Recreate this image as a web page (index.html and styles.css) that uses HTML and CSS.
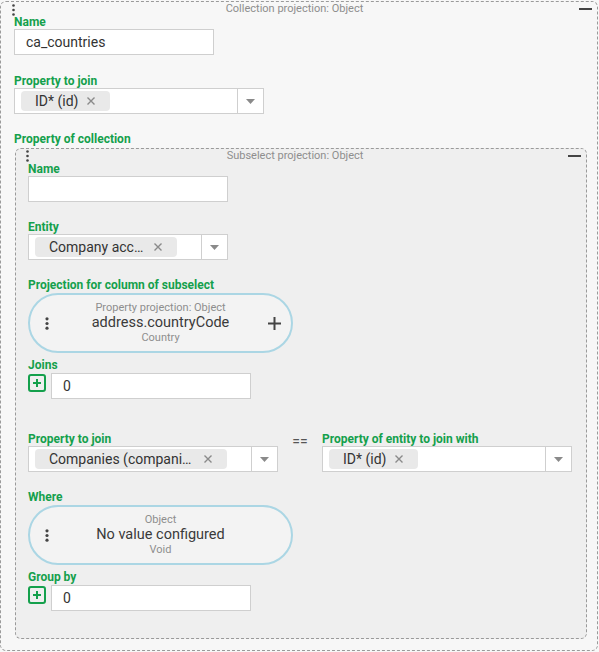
FILE: index.html
```html
<!DOCTYPE html>
<html>
<head>
<meta charset="utf-8">
<link rel="stylesheet" href="styles.css">
</head>
<body>
<div class="node node-outer">
  <div class="node-head">
    <svg class="kebab node-kebab" width="3" height="12" viewBox="0 0 3 12"><circle cx="1.5" cy="1.5" r="1.3"/><circle cx="1.5" cy="6" r="1.3"/><circle cx="1.5" cy="10.5" r="1.3"/></svg>
    <span class="node-title">Collection projection: Object</span>
    <span class="node-min"></span>
  </div>

  <div class="field field-top">
    <div class="lbl">Name</div>
    <div class="txt">ca_countries</div>
  </div>

  <div class="field">
    <div class="lbl">Property to join</div>
    <div class="sel w250">
      <div class="sel-val"><span class="chip"><span class="chip-text">ID* (id)</span><svg class="chip-x" width="8" height="8" viewBox="0 0 8 8"><path d="M0.5 0.5L7.5 7.5M7.5 0.5L0.5 7.5"/></svg></span></div>
      <div class="sel-caret"><svg width="9" height="5" viewBox="0 0 9 5"><path d="M0 0H9L4.5 5Z"/></svg></div>
    </div>
  </div>

  <div class="lbl">Property of collection</div>
  <div class="node node-inner">
    <div class="node-head">
      <svg class="kebab node-kebab" width="3" height="12" viewBox="0 0 3 12"><circle cx="1.5" cy="1.5" r="1.3"/><circle cx="1.5" cy="6" r="1.3"/><circle cx="1.5" cy="10.5" r="1.3"/></svg>
      <span class="node-title">Subselect projection: Object</span>
      <span class="node-min"></span>
    </div>

    <div class="field">
      <div class="lbl">Name</div>
      <div class="txt"></div>
    </div>

    <div class="field">
      <div class="lbl">Entity</div>
      <div class="sel w200">
        <div class="sel-val"><span class="chip"><span class="chip-text">Company accounts</span><svg class="chip-x" width="8" height="8" viewBox="0 0 8 8"><path d="M0.5 0.5L7.5 7.5M7.5 0.5L0.5 7.5"/></svg></span></div>
        <div class="sel-caret"><svg width="9" height="5" viewBox="0 0 9 5"><path d="M0 0H9L4.5 5Z"/></svg></div>
      </div>
    </div>

    <div class="field field-pill">
      <div class="lbl">Projection for column of subselect</div>
      <div class="pill">
        <svg class="kebab pill-kebab" width="4" height="13" viewBox="0 0 4 13"><circle cx="2" cy="1.8" r="1.6"/><circle cx="2" cy="6.5" r="1.6"/><circle cx="2" cy="11.2" r="1.6"/></svg>
        <div class="pill-body">
          <div class="pill-sub">Property projection: Object</div>
          <div class="pill-main">address.countryCode</div>
          <div class="pill-sub">Country</div>
        </div>
        <svg class="pill-plus" width="13" height="13" viewBox="0 0 13 13"><path d="M6.5 0V13M0 6.5H13"/></svg>
      </div>
    </div>

    <div class="field field-joins">
      <div class="lbl">Joins</div>
      <div class="add-row">
        <svg class="add-btn" width="18" height="18" viewBox="0 0 18 18"><rect x="1" y="1" width="16" height="16" rx="2"/><path d="M9 5V13M5 9H13"/></svg>
        <div class="txt">0</div>
      </div>
    </div>

    <div class="field join-row">
      <div class="join-col">
        <div class="lbl">Property to join</div>
        <div class="sel w250">
          <div class="sel-val"><span class="chip"><span class="chip-text">Companies (companies)</span><svg class="chip-x" width="8" height="8" viewBox="0 0 8 8"><path d="M0.5 0.5L7.5 7.5M7.5 0.5L0.5 7.5"/></svg></span></div>
          <div class="sel-caret"><svg width="9" height="5" viewBox="0 0 9 5"><path d="M0 0H9L4.5 5Z"/></svg></div>
        </div>
      </div>
      <div class="join-eq">==</div>
      <div class="join-col">
        <div class="lbl">Property of entity to join with</div>
        <div class="sel w250">
          <div class="sel-val"><span class="chip"><span class="chip-text">ID* (id)</span><svg class="chip-x" width="8" height="8" viewBox="0 0 8 8"><path d="M0.5 0.5L7.5 7.5M7.5 0.5L0.5 7.5"/></svg></span></div>
          <div class="sel-caret"><svg width="9" height="5" viewBox="0 0 9 5"><path d="M0 0H9L4.5 5Z"/></svg></div>
        </div>
      </div>
    </div>

    <div class="field field-pill">
      <div class="lbl">Where</div>
      <div class="pill">
        <svg class="kebab pill-kebab" width="4" height="13" viewBox="0 0 4 13"><circle cx="2" cy="1.8" r="1.6"/><circle cx="2" cy="6.5" r="1.6"/><circle cx="2" cy="11.2" r="1.6"/></svg>
        <div class="pill-body">
          <div class="pill-sub">Object</div>
          <div class="pill-main">No value configured</div>
          <div class="pill-sub">Void</div>
        </div>
      </div>
    </div>

    <div class="field field-last">
      <div class="lbl">Group by</div>
      <div class="add-row">
        <svg class="add-btn" width="18" height="18" viewBox="0 0 18 18"><rect x="1" y="1" width="16" height="16" rx="2"/><path d="M9 5V13M5 9H13"/></svg>
        <div class="txt">0</div>
      </div>
    </div>
  </div>
</div>
</body>
</html>
```

FILE: styles.css
```css
* { box-sizing: border-box; }
html, body { margin: 0; padding: 0; background: #f7f7f7; }
body { font-family: Roboto, "Liberation Sans", sans-serif; color: #333; }

.node {
  position: relative;
  border: 1px dashed #9a9a9a;
  border-radius: 6px;
}
.node-outer {
  margin-top: 1px;
  width: 598px;
  background: #f7f7f7;
  padding: 0 10px 11px 13px;
}
.node-inner {
  margin: 2px 0 0 1px;
  background: #efefef;
  padding: 0 12px 27px 12px;
}
.node-head {
  height: 13px;
  display: flex;
  justify-content: center;
  padding-right: 12px;
  font-size: 11px;
  line-height: 13px;
  color: #8e8e8e;
  white-space: nowrap;
}
.kebab { fill: #444; display: block; }
.node-kebab { position: absolute; top: 2px; left: 11px; }
.node-outer > .node-head > .node-kebab { left: 11px; top: 2px; }
.node-inner > .node-head > .node-kebab { left: 10px; top: 1px; }
.node-min {
  position: absolute;
  top: 6px;
  right: 5px;
  width: 13px;
  height: 2px;
  background: #444;
}

.field { margin-bottom: 18px; }
.field-top { margin-bottom: 19px; }
.field-pill { margin-bottom: 5px; }
.field-joins { margin-bottom: 33px; }
.field-last { margin-bottom: 0; }

.lbl {
  font-size: 12px;
  font-weight: 700;
  line-height: 14px;
  color: #14a04c;
  white-space: nowrap;
}

.txt {
  width: 200px;
  height: 26px;
  border: 1px solid #cfcfcf;
  background: #fff;
  padding: 0 11px;
  font-size: 14px;
  line-height: 24px;
  color: #333;
}

.sel {
  display: flex;
  height: 26px;
  border: 1px solid #cfcfcf;
  background: #fff;
}
.w200 { width: 200px; }
.w250 { width: 250px; }
.sel-val {
  flex: 1;
  min-width: 0;
  display: flex;
  align-items: center;
  padding: 0 6px;
}
.chip {
  display: flex;
  align-items: center;
  gap: 9px;
  max-width: calc(100% - 18px);
  height: 20px;
  padding: 0 15px 0 14px;
  background: #e9e9e9;
  border-radius: 4px;
  font-size: 14px;
  line-height: 20px;
  color: #333;
}
.chip-text {
  overflow: hidden;
  white-space: nowrap;
  text-overflow: ellipsis;
}
.chip-x { flex: none; display: block; stroke: #8a8a8a; stroke-width: 1.4; fill: none; }
.sel-caret {
  flex: none;
  width: 26px;
  border-left: 1px solid #cfcfcf;
  display: flex;
  align-items: center;
  justify-content: center;
}
.sel-caret svg { display: block; fill: #8a8a8a; }

.pill {
  margin-top: 1px;
  width: 265px;
  height: 60px;
  border: 2px solid #abd6e4;
  border-radius: 30px;
  background: #f3f3f3;
  display: grid;
  align-items: center;
}
.pill > * { grid-area: 1 / 1; }
.pill-kebab { justify-self: start; margin-left: 15px; }
.pill-plus { justify-self: end; margin-right: 10px; stroke: #444; stroke-width: 2; fill: none; display: block; }
.pill-body { justify-self: center; text-align: center; white-space: nowrap; }
.pill-sub { font-size: 11px; line-height: 14px; color: #8e8e8e; }
.pill-main { font-size: 14.5px; line-height: 16px; color: #3a3a3a; }

.add-row {
  margin-top: 1px;
  display: flex;
  align-items: flex-start;
  gap: 5px;
}
.add-btn {
  display: block;
  margin-top: 1px;
  fill: none;
  stroke: #14a04c;
  stroke-width: 2;
}

.join-row { display: flex; align-items: flex-start; }
.join-col { width: 250px; }
.join-eq {
  width: 44px;
  text-align: center;
  font-size: 14px;
  line-height: 16px;
  padding-top: 1px;
  color: #555;
}
```
